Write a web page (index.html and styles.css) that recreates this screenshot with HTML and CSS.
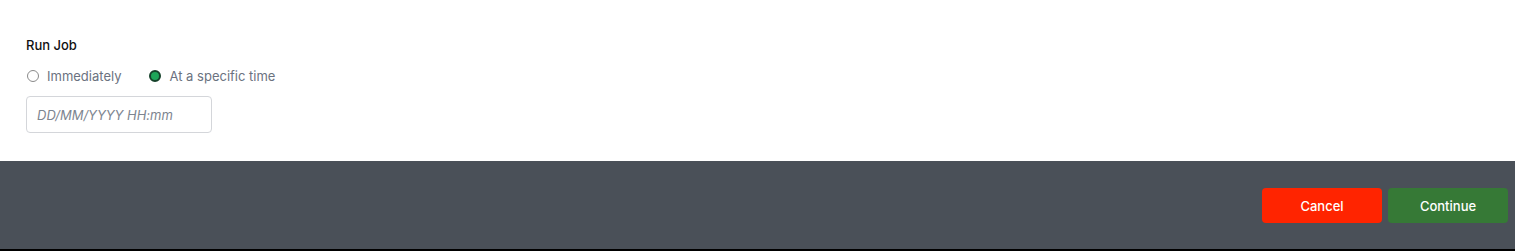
FILE: index.html
```html
<!DOCTYPE html>
<html lang="en">

<head>
  <meta charset="UTF-8">
  <meta name="viewport" content="width=device-width, initial-scale=1.0">
  <title>Run Job</title>
  <link rel="stylesheet" href="styles.css">
</head>

<body>
  <div class="panel">
    <div class="field">
      <div class="label">Run Job</div>
      <div class="options">
        <label class="option"><span class="radio"></span>Immediately</label>
        <label class="option"><span class="radio checked"></span>At a specific time</label>
      </div>
      <div class="input"><span class="placeholder">DD/MM/YYYY HH:mm</span></div>
    </div>
  </div>

  <div class="footer">
    <button class="btn cancel">Cancel</button>
    <button class="btn continue">Continue</button>
  </div>
</body>

</html>
```

FILE: styles.css
```css
body {
  margin: 0;
  background: #000;
  font-family: Inter, "Noto Sans", sans-serif;
}

.panel {
  height: 161px;
  background: #fff;
  box-sizing: border-box;
  padding: 38px 26px 0;
}

.field {
  display: flex;
  flex-direction: column;
}

.label {
  font-size: 13px;
  font-weight: 500;
  color: #111;
  line-height: 15px;
}

.options {
  display: flex;
  gap: 27px;
  margin-top: 15px;
}

.option {
  display: flex;
  align-items: center;
  gap: 8px;
  font-size: 13px;
  color: #6b7280;
  line-height: 16px;
}

.radio {
  width: 12px;
  height: 12px;
  border-radius: 50%;
  border: 1px solid #8a8a8a;
  box-sizing: border-box;
  background: #fff;
  margin-left: 1px;
}

.radio.checked {
  border: 2px solid #15412a;
  background: #1ea559;
}

.input {
  width: 186px;
  height: 37px;
  margin-top: 12px;
  box-sizing: border-box;
  border: 1px solid #d4d6da;
  border-radius: 4px;
  padding: 0 10px;
  display: flex;
  align-items: center;
}

.placeholder {
  font-size: 13px;
  font-style: italic;
  color: #7d8590;
}

.footer {
  height: 88px;
  background: #4a5058;
  display: flex;
  justify-content: flex-end;
  align-items: flex-start;
  gap: 6px;
  padding: 27px 7px 0 0;
  box-sizing: border-box;
}

.btn {
  width: 120px;
  height: 35px;
  border: none;
  border-radius: 4px;
  color: #fff;
  font-family: Inter, "Noto Sans", sans-serif;
  font-size: 13px;
  font-weight: 500;
}

.cancel {
  background: #ff2400;
}

.continue {
  background: #367936;
}
```
